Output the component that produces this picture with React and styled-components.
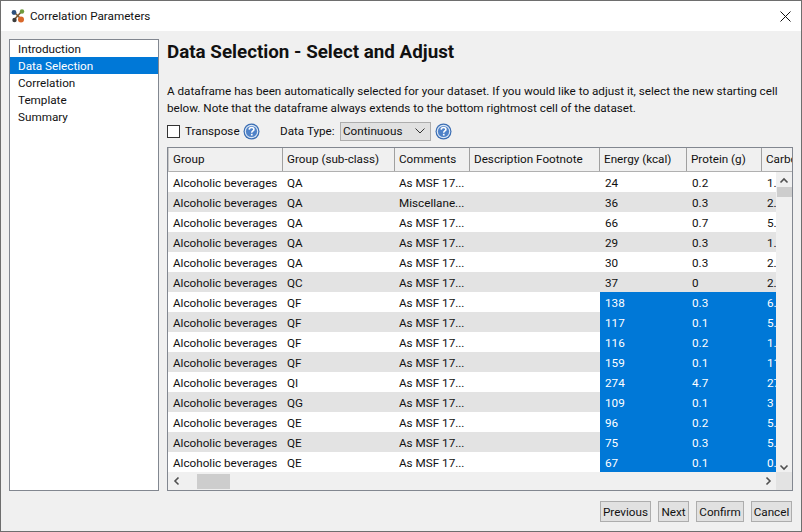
import React from 'react';
import styled, {createGlobalStyle} from "styled-components";

const GlobalStyle = createGlobalStyle`
  html, body {
    margin: 0;
    padding: 0;
    background: #f0f0f0;
  }
  body {
    font-family: Roboto, "Liberation Sans", sans-serif;
    font-size: 11.7px;
    color: #111;
  }
`

const steps = ["Introduction", "Data Selection", "Correlation", "Template", "Summary"];

const columns = [
    {label: "Group", width: 114},
    {label: "Group (sub-class)", width: 112},
    {label: "Comments", width: 75},
    {label: "Description Footnote", width: 130},
    {label: "Energy (kcal)", width: 87},
    {label: "Protein (g)", width: 75},
    {label: "Carbohydrate", width: 30},
];

const rows = [
    ["QA", "As MSF 17...", "24", "0.2", "1.", false],
    ["QA", "Miscellane...", "36", "0.3", "2.", false],
    ["QA", "As MSF 17...", "66", "0.7", "5.", false],
    ["QA", "As MSF 17...", "29", "0.3", "1.", false],
    ["QA", "As MSF 17...", "30", "0.3", "2.", false],
    ["QC", "As MSF 17...", "37", "0", "2.", false],
    ["QF", "As MSF 17...", "138", "0.3", "6.", true],
    ["QF", "As MSF 17...", "117", "0.1", "5.", true],
    ["QF", "As MSF 17...", "116", "0.2", "1.", true],
    ["QF", "As MSF 17...", "159", "0.1", "11", true],
    ["QI", "As MSF 17...", "274", "4.7", "27", true],
    ["QG", "As MSF 17...", "109", "0.1", "3", true],
    ["QE", "As MSF 17...", "96", "0.2", "5.", true],
    ["QE", "As MSF 17...", "75", "0.3", "5.", true],
    ["QE", "As MSF 17...", "67", "0.1", "0.", true],
];

const HelpIcon = () => (
    <svg width="17" height="17" viewBox="0 0 17 17">
        <circle cx="8.5" cy="8.5" r="8" fill="#3a6db3"/>
        <circle cx="8.5" cy="8.5" r="6.8" fill="#dbe7f5"/>
        <circle cx="8.5" cy="8.5" r="5.6" fill="#4f82c8"/>
        <path d="M6.2 6.6C6.3 5.2 7.3 4.5 8.6 4.5 10 4.5 10.9 5.3 10.9 6.4 10.9 8 8.7 8 8.7 9.8" fill="none" stroke="#fff" strokeWidth="1.6"/>
        <rect x="7.9" y="10.8" width="1.7" height="1.7" fill="#fff"/>
    </svg>
);

const AppLogo = () => (
    <svg width="16" height="16" viewBox="0 0 16 16">
        <path d="M4 4L12 12M12 3L4 12" stroke="#7a5a34" strokeWidth="1.6"/>
        <circle cx="4" cy="4.5" r="2.4" fill="#2d4f7c"/>
        <circle cx="12" cy="3.5" r="2.2" fill="#6f9a3c"/>
        <circle cx="4.5" cy="12" r="2.2" fill="#3c3c3c"/>
        <circle cx="11" cy="11.5" r="3" fill="#d9682a"/>
    </svg>
);

const Chevron = ({d}) => (
    <svg width="10" height="10" viewBox="0 0 10 10">
        <path d={d} fill="none" stroke="#505050" strokeWidth="1.6"/>
    </svg>
);

const App = () => {
    return (
        <>
            <GlobalStyle/>
            <Window>
                <TitleBar>
                    <AppLogo/>
                    <Title>Correlation Parameters</Title>
                    <CloseIcon viewBox="0 0 11 11">
                        <path d="M0.5 0.5L10.5 10.5M10.5 0.5L0.5 10.5" stroke="#111" strokeWidth="1" fill="none"/>
                    </CloseIcon>
                </TitleBar>
                <Body>
                    <Main>
                        <StepList>
                            {steps.map(step => (
                                <Step key={step} $active={step === "Data Selection"}>{step}</Step>
                            ))}
                        </StepList>
                        <Content>
                            <Heading>Data Selection - Select and Adjust</Heading>
                            <Description>
                                A dataframe has been automatically selected for your dataset. If you would like to adjust it, select the new starting cell
                                <br/>
                                below. Note that the dataframe always extends to the bottom rightmost cell of the dataset.
                            </Description>
                            <Options>
                                <Checkbox/>
                                <OptionLabel>Transpose</OptionLabel>
                                <HelpIcon/>
                                <TypeLabel>Data Type:</TypeLabel>
                                <Select>
                                    Continuous
                                    <svg width="10" height="6" viewBox="0 0 10 6">
                                        <path d="M0.5 0.5L5 5L9.5 0.5" fill="none" stroke="#333" strokeWidth="1"/>
                                    </svg>
                                </Select>
                                <HelpIcon/>
                            </Options>
                            <TableFrame>
                                <TableArea>
                                    <HeaderRow>
                                        {columns.map(col => (
                                            <HeaderCell key={col.label} $width={col.width}>{col.label}</HeaderCell>
                                        ))}
                                    </HeaderRow>
                                    <RowsArea>
                                        <Rows>
                                            {rows.map((row, i) => (
                                                <Row key={i} $odd={i % 2 === 1}>
                                                    <Cell $width={114}>Alcoholic beverages</Cell>
                                                    <Cell $width={112}>{row[0]}</Cell>
                                                    <Cell $width={75}>{row[1]}</Cell>
                                                    <Cell $width={131}/>
                                                    <Cell $width={87} $selected={row[5]}>{row[2]}</Cell>
                                                    <Cell $width={75} $selected={row[5]}>{row[3]}</Cell>
                                                    <Cell $width={14} $selected={row[5]}>{row[4]}</Cell>
                                                </Row>
                                            ))}
                                        </Rows>
                                        <VScroll>
                                            <Chevron d="M1.5 6.5L5 3L8.5 6.5"/>
                                            <VThumb/>
                                            <VSpacer/>
                                            <Chevron d="M1.5 3.5L5 7L8.5 3.5"/>
                                        </VScroll>
                                    </RowsArea>
                                </TableArea>
                                <HScroll>
                                    <Chevron d="M6.5 1.5L3 5L6.5 8.5"/>
                                    <HThumb/>
                                    <HSpacer/>
                                    <Chevron d="M3.5 1.5L7 5L3.5 8.5"/>
                                    <Corner/>
                                </HScroll>
                            </TableFrame>
                        </Content>
                    </Main>
                    <Footer>
                        <Button $width={51}>Previous</Button>
                        <Button $width={31}>Next</Button>
                        <Button $width={48}>Confirm</Button>
                        <Button $width={41}>Cancel</Button>
                    </Footer>
                </Body>
            </Window>
        </>
    );
};

const Window = styled.div`
  width: 802px;
  height: 532px;
  box-sizing: border-box;
  border: 1px solid #6e6e6e;
  display: flex;
  flex-direction: column;
  overflow: hidden;
`

const TitleBar = styled.div`
  height: 30px;
  background: #fff;
  display: flex;
  align-items: center;
  padding: 0 10px 0 9px;
  gap: 4px;
  flex-shrink: 0;
`

const Title = styled.div`
  flex: 1;
`

const CloseIcon = styled.svg`
  width: 11px;
  height: 11px;
`

const Body = styled.div`
  flex: 1;
  display: flex;
  flex-direction: column;
  background: #f0f0f0;
  min-height: 0;
`

const Main = styled.div`
  display: flex;
  padding: 8px 9px 0 8px;
  gap: 8px;
  flex-shrink: 0;
`

const StepList = styled.div`
  width: 150px;
  height: 452px;
  box-sizing: border-box;
  background: #fff;
  border: 1px solid #828790;
  flex-shrink: 0;
`

const Step = styled.div`
  height: 17px;
  box-sizing: border-box;
  padding: 1px 0 0 8px;
  line-height: 17px;
  background: ${props => props.$active ? "#0078d7" : "transparent"};
  color: ${props => props.$active ? "#fff" : "#111"};
`

const Content = styled.div`
  flex: 1;
  min-width: 0;
`

const Heading = styled.h1`
  margin: 0;
  font-size: 18.8px;
  font-weight: 700;
  line-height: 26px;
  height: 44px;
`

const Description = styled.p`
  margin: 0;
  line-height: 17px;
  height: 37px;
  white-space: nowrap;
`

const Options = styled.div`
  display: flex;
  align-items: center;
  height: 22px;
  margin-bottom: 5px;
`

const Checkbox = styled.div`
  width: 13px;
  height: 13px;
  box-sizing: border-box;
  border: 1px solid #333;
  background: #fff;
  margin-right: 5px;
`

const OptionLabel = styled.span`
  width: 58px;
`

const TypeLabel = styled.span`
  width: 60px;
  margin-left: 20px;
`

const Select = styled.div`
  width: 91px;
  height: 19px;
  box-sizing: border-box;
  background: #e1e1e1;
  border: 1px solid #adadad;
  display: flex;
  align-items: center;
  justify-content: space-between;
  padding: 0 5px 0 2px;
  margin-right: 4px;
`

const TableFrame = styled.div`
  width: 626px;
  height: 344px;
  box-sizing: border-box;
  border: 1px solid #828790;
  display: flex;
  flex-direction: column;
`

const TableArea = styled.div`
  flex: 1;
  min-height: 0;
  overflow: hidden;
`

const HeaderRow = styled.div`
  display: flex;
  height: 23px;
  background: #f0f0f0;
  border-bottom: 1px solid #b0b0b0;
  border-left: 1px solid #c8c8c8;
  overflow: hidden;
`

const HeaderCell = styled.div`
  flex: 0 0 auto;
  width: ${props => props.$width}px;
  box-sizing: border-box;
  padding-left: 4px;
  line-height: 23px;
  border-right: 1px solid #a0a0a0;
  white-space: nowrap;
  overflow: hidden;
  &:last-child {
    border-right: 0;
  }
`

const RowsArea = styled.div`
  display: flex;
`

const Rows = styled.div`
  width: 608px;
  overflow: hidden;
`

const Row = styled.div`
  display: flex;
  height: 20px;
  background: ${props => props.$odd ? "#e3e3e3" : "#fff"};
`

const Cell = styled.div`
  flex: 0 0 auto;
  width: ${props => props.$width}px;
  box-sizing: border-box;
  padding: 1px 0 0 5px;
  line-height: 20px;
  white-space: nowrap;
  overflow: hidden;
  background: ${props => props.$selected ? "#0078d7" : "transparent"};
  color: ${props => props.$selected ? "#fff" : "#111"};
`

const VScroll = styled.div`
  width: 16px;
  height: 300px;
  background: #f0f0f0;
  display: flex;
  flex-direction: column;
  align-items: center;
  padding-top: 4px;
  box-sizing: border-box;
`

const VThumb = styled.div`
  width: 15px;
  height: 10px;
  margin-top: 1px;
  background: #cdcdcd;
`

const VSpacer = styled.div`
  flex: 1;
`

const HScroll = styled.div`
  height: 18px;
  display: flex;
  align-items: center;
  padding-left: 4px;
  background: #f0f0f0;
  flex-shrink: 0;
`

const HThumb = styled.div`
  width: 33px;
  height: 15px;
  margin-left: 15px;
  background: #cdcdcd;
`

const HSpacer = styled.div`
  flex: 1;
`

const Corner = styled.div`
  width: 16px;
  height: 18px;
  margin-left: 3px;
  background: #e3e3e3;
`

const Footer = styled.div`
  display: flex;
  justify-content: flex-end;
  gap: 7px;
  padding: 10px 9px 0 0;
`

const Button = styled.div`
  width: ${props => props.$width}px;
  height: 21px;
  box-sizing: border-box;
  background: #e1e1e1;
  border: 1px solid #adadad;
  line-height: 20px;
  text-align: center;
`

export default App;
